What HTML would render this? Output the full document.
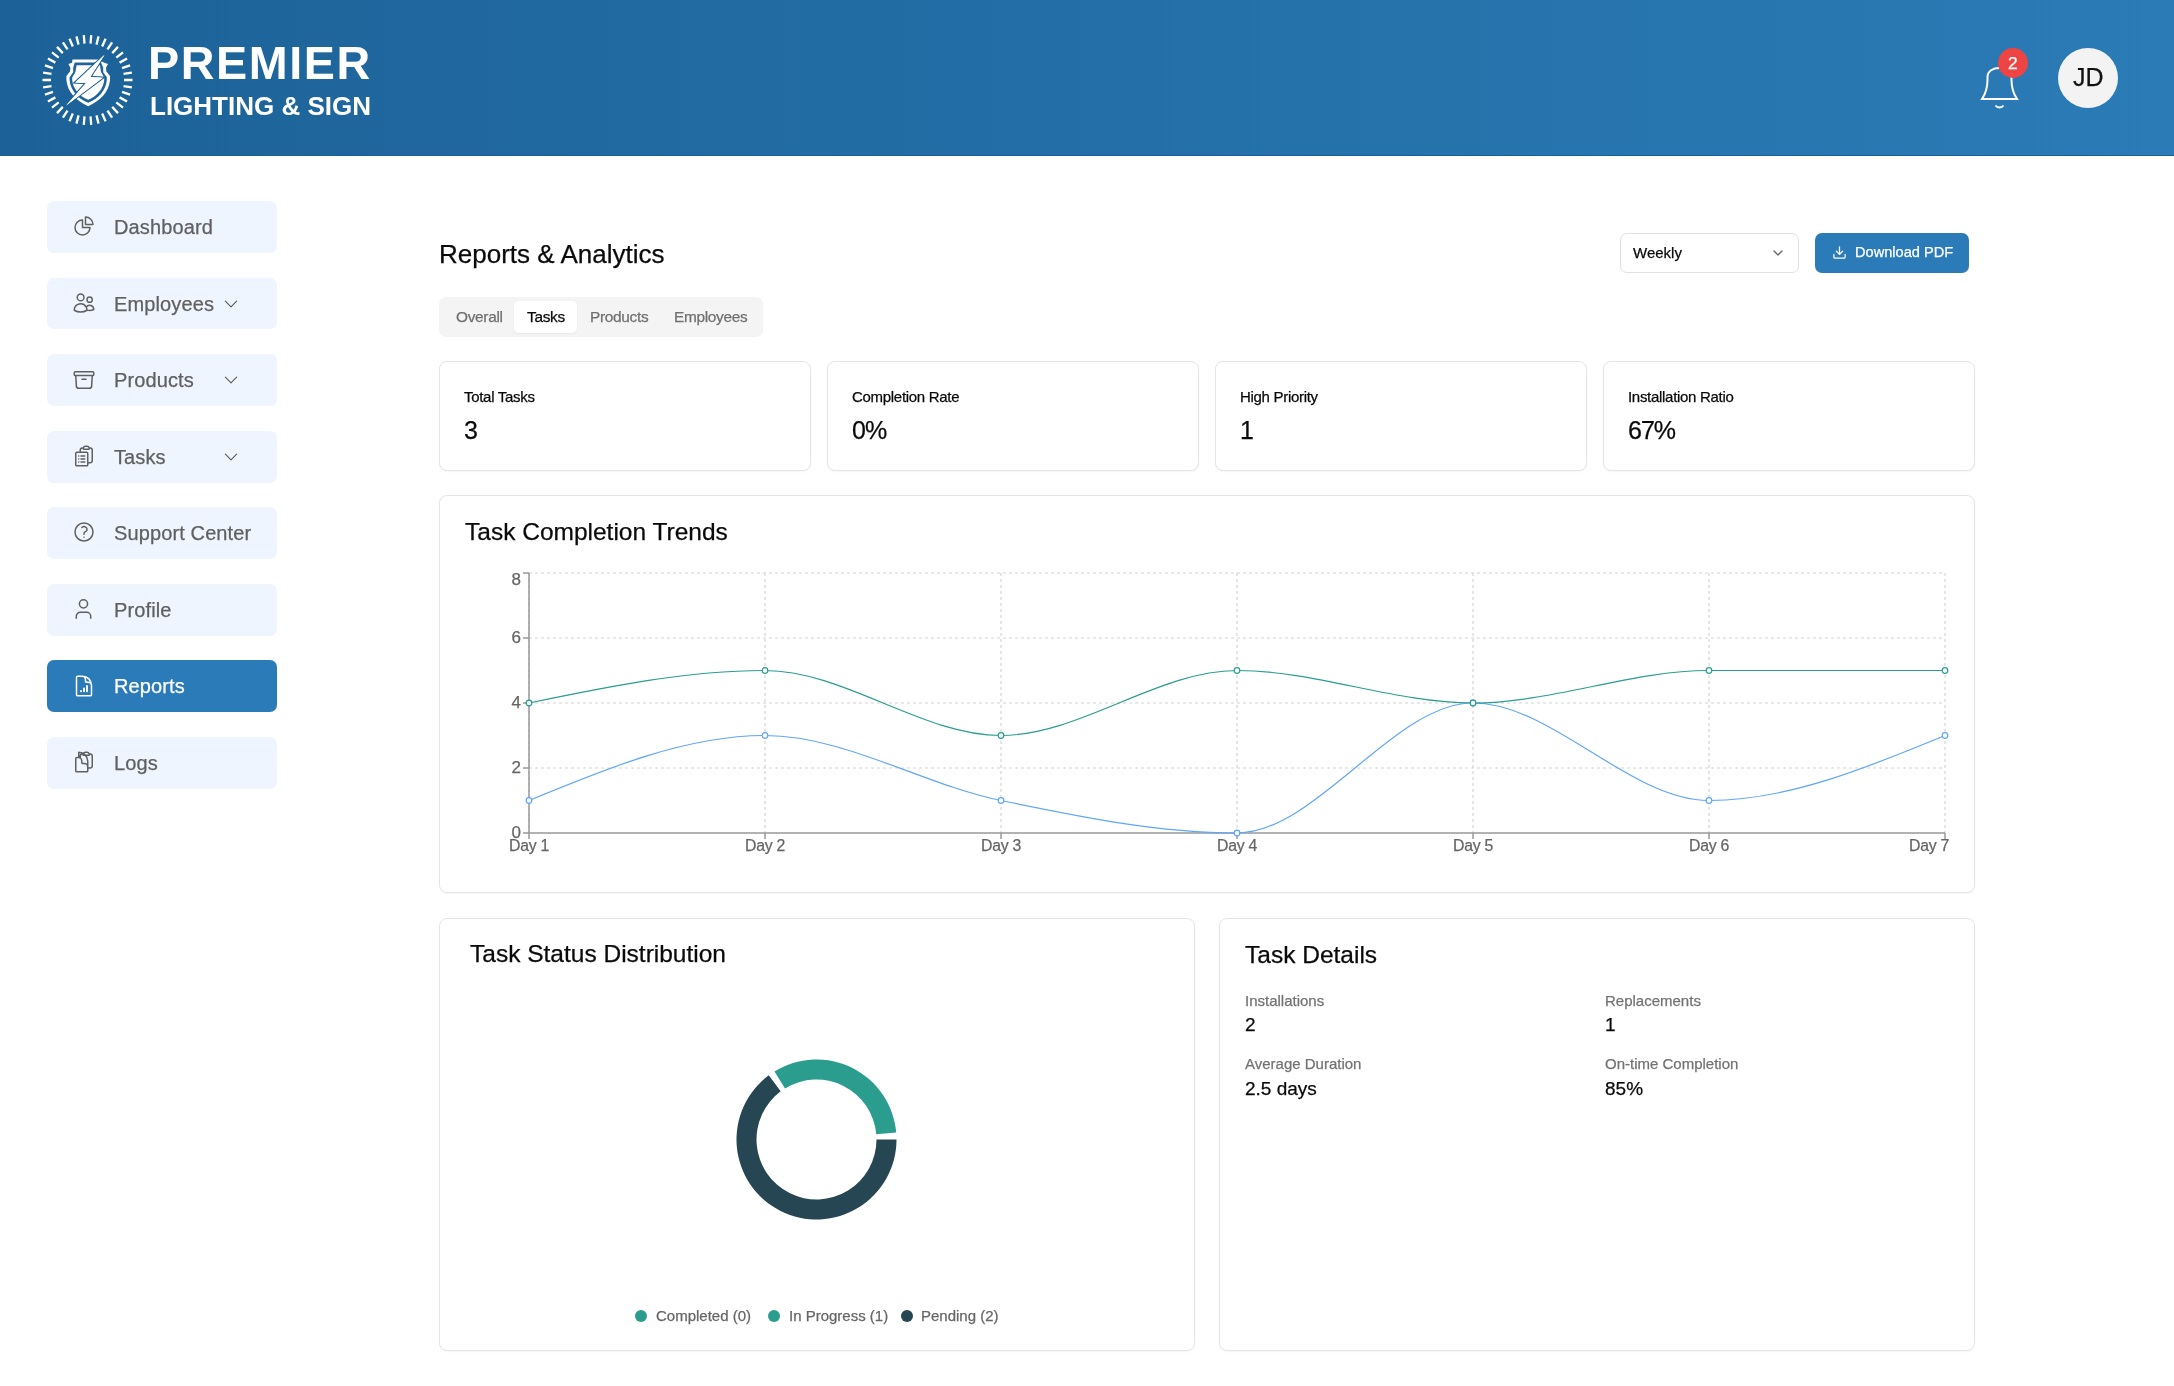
<!DOCTYPE html><html><head><meta charset="utf-8"><style>
*{box-sizing:border-box;margin:0;padding:0}
html,body{width:2174px;height:1386px;overflow:hidden;background:#fff;font-family:"Liberation Sans",sans-serif;-webkit-font-smoothing:antialiased}
.t{position:absolute;white-space:nowrap;line-height:1;will-change:transform;-webkit-text-stroke:0.25px currentColor}
.b{position:absolute}
</style></head><body>
<div class="b" style="left:0;top:0;width:2174px;height:156px;background:linear-gradient(90deg,#1c6298 0%,#2b7bb6 100%);border-bottom:1px solid #17609d"></div>
<svg class="b" style="left:0;top:0" width="400" height="156" viewBox="0 0 400 156">
<path d="M90.51 43.62L91.22 35.15M96.46 44.62L98.55 36.38M102.16 46.57L105.58 38.79M107.46 49.44L112.11 42.33M112.22 53.15L117.98 46.89M116.30 57.58L123.01 52.36M119.60 62.63L127.08 58.58M122.02 68.15L130.06 65.39M123.50 73.99L131.89 72.59M124.00 80.00L132.50 80.00M123.50 86.01L131.89 87.41M122.02 91.85L130.06 94.61M119.60 97.37L127.08 101.42M116.30 102.42L123.01 107.64M112.22 106.85L117.98 113.11M107.46 110.56L112.11 117.67M102.16 113.43L105.58 121.21M96.46 115.38L98.55 123.62M90.51 116.38L91.22 124.85M84.49 116.38L83.78 124.85M78.54 115.38L76.45 123.62M72.84 113.43L69.42 121.21M67.54 110.56L62.89 117.67M62.78 106.85L57.02 113.11M58.70 102.42L51.99 107.64M55.40 97.37L47.92 101.42M52.98 91.85L44.94 94.61M51.50 86.01L43.11 87.41M51.00 80.00L42.50 80.00M51.50 73.99L43.11 72.59M52.98 68.15L44.94 65.39M55.40 62.63L47.92 58.58M58.70 57.58L51.99 52.36M62.78 53.15L57.02 46.89M67.54 49.44L62.89 42.33M72.84 46.57L69.42 38.79M78.54 44.62L76.45 36.38M84.49 43.62L83.78 35.15" stroke="#fff" stroke-width="2.3" stroke-linecap="butt" fill="none"/>
<path d="M72.5 59.5 H98 L100.5 61 L104.5 62.8 L108 64 L106 67.8 L106.4 71.5 L110 76 L110 80 C109 92 100 101 88.2 106.2 C76.4 101 67.4 92 66.4 80 L66.4 76 L70 71.5 L70.4 67.8 L68.4 64 L72 62.8 Z" fill="#fff"/>
<path d="M74.8 62.4 H101 L103.2 67.5 L103.2 72.3 L106.8 77.2 L106.8 80 C106 90 98.5 98.8 88.2 102.8 C77.9 98.8 70.4 90 69.6 80 L69.6 77.2 L73.2 72.3 L73.2 67.5 Z" fill="#1e649b"/>
<path d="M76.6 65.2 H100 L101 72 L104.2 77.5 L104.2 80 C103.4 88.6 97 96.4 88.2 99.8 C79.4 96.4 73 88.6 72.2 80 L72.2 77.5 L75.4 72 Z" fill="#fff"/>
<path d="M104.6 54.8 L75.2 82.5 L86 83 L66.1 105.4 L102.9 77.7 L90.3 76.9 Z" fill="#fff" stroke="#1e649b" stroke-width="2.4" stroke-linejoin="miter" paint-order="stroke"/>
<path d="M104.6 54.8 L75.2 82.5 L86 83 L66.1 105.4 L102.9 77.7 L90.3 76.9 Z" fill="#fff"/>
</svg>
<div class="t" style="left:147.6px;top:39.85px;font-size:46.7px;color:#fff;font-weight:700;letter-spacing:1.58px;-webkit-text-stroke:0">PREMIER</div>
<div class="t" style="left:149.6px;top:92.55px;font-size:26px;color:#fff;font-weight:700;letter-spacing:0px;-webkit-text-stroke:0">LIGHTING &amp; SIGN</div>
<svg class="b" style="left:1970px;top:55px" width="60" height="60" viewBox="1970 55 60 60">
<path d="M1982 99 L2017 99 C2013 93 2011.5 88 2011.5 80 L2011.5 77 C2011.5 71 2006 68 1999.5 68 C1993 68 1987.5 71 1987.5 77 L1987.5 80 C1987.5 88 1986 93 1982 99 Z" fill="none" stroke="#fff" stroke-width="2"/>
<path d="M1995.5 105.5 C1997.5 108 2001.5 108 2003.5 105.5" fill="none" stroke="#fff" stroke-width="2"/>
</svg>
<div class="b" style="left:1998.2px;top:48.4px;width:30px;height:30px;border-radius:50%;background:#ef4444"></div>
<div class="t" style="left:2008.4px;top:55.30px;font-size:17.4px;color:#fff;font-weight:400;letter-spacing:0px;">2</div>
<div class="b" style="left:2058px;top:48px;width:60px;height:60px;border-radius:50%;background:#f3f3f3"></div>
<div class="t" style="left:2073.4px;top:65.25px;font-size:25px;color:#111;font-weight:400;letter-spacing:0px;">JD</div>
<div class="b" style="left:47px;top:201px;width:230px;height:51.5px;border-radius:7px;background:#eef5fe"></div>
<svg class="b" style="left:72px;top:214.35px" width="24" height="24" viewBox="0 0 24 24" fill="none" stroke="#606060" stroke-width="1.5" stroke-linecap="round" stroke-linejoin="round"><path d="M10.5 6a7.5 7.5 0 1 0 7.5 7.5h-7.5V6Z"/><path d="M13.5 10.5H21A7.5 7.5 0 0 0 13.5 3v7.5Z"/></svg>
<div class="t" style="left:113.5px;top:216.75px;font-size:20px;color:#606060;font-weight:400;letter-spacing:0.12px;">Dashboard</div>
<div class="b" style="left:47px;top:277.9px;width:230px;height:51.5px;border-radius:7px;background:#eef5fe"></div>
<svg class="b" style="left:72px;top:291.25px" width="24" height="24" viewBox="0 0 24 24" fill="none" stroke="#606060" stroke-width="1.5" stroke-linecap="round" stroke-linejoin="round"><path d="M15 19.128a9.38 9.38 0 0 0 2.625.372 9.337 9.337 0 0 0 4.121-.952 4.125 4.125 0 0 0-7.533-2.493M15 19.128v-.003c0-1.113-.285-2.16-.786-3.07M15 19.128v.106A12.318 12.318 0 0 1 8.624 21c-2.331 0-4.512-.645-6.374-1.766l-.001-.109a6.375 6.375 0 0 1 11.964-3.07M12 6.375a3.375 3.375 0 1 1-6.75 0 3.375 3.375 0 0 1 6.75 0Zm8.25 2.25a2.625 2.625 0 1 1-5.25 0 2.625 2.625 0 0 1 5.25 0Z"/></svg>
<div class="t" style="left:113.5px;top:293.65px;font-size:20px;color:#606060;font-weight:400;letter-spacing:0.12px;">Employees</div>
<svg class="b" style="left:222px;top:294.65px" width="18" height="18" viewBox="0 0 24 24" fill="none" stroke="#606060" stroke-width="1.6" stroke-linecap="round" stroke-linejoin="round"><path d="m19.5 8.25-7.5 7.5-7.5-7.5"/></svg>
<div class="b" style="left:47px;top:354.4px;width:230px;height:51.5px;border-radius:7px;background:#eef5fe"></div>
<svg class="b" style="left:72px;top:367.75px" width="24" height="24" viewBox="0 0 24 24" fill="none" stroke="#606060" stroke-width="1.5" stroke-linecap="round" stroke-linejoin="round"><path d="m20.25 7.5-.625 10.632a2.25 2.25 0 0 1-2.247 2.118H6.622a2.25 2.25 0 0 1-2.247-2.118L3.75 7.5M10 11.25h4M3.375 7.5h17.25c.621 0 1.125-.504 1.125-1.125v-1.5c0-.621-.504-1.125-1.125-1.125H3.375c-.621 0-1.125.504-1.125 1.125v1.5c0 .621.504 1.125 1.125 1.125Z"/></svg>
<div class="t" style="left:113.5px;top:370.15px;font-size:20px;color:#606060;font-weight:400;letter-spacing:0.12px;">Products</div>
<svg class="b" style="left:222px;top:371.15px" width="18" height="18" viewBox="0 0 24 24" fill="none" stroke="#606060" stroke-width="1.6" stroke-linecap="round" stroke-linejoin="round"><path d="m19.5 8.25-7.5 7.5-7.5-7.5"/></svg>
<div class="b" style="left:47px;top:431px;width:230px;height:51.5px;border-radius:7px;background:#eef5fe"></div>
<svg class="b" style="left:72px;top:444.35px" width="24" height="24" viewBox="0 0 24 24" fill="none" stroke="#606060" stroke-width="1.5" stroke-linecap="round" stroke-linejoin="round"><path d="M9 12h3.75M9 15h3.75M9 18h3.75m3 .75H18a2.25 2.25 0 0 0 2.25-2.25V6.108c0-1.135-.845-2.098-1.976-2.192a48.424 48.424 0 0 0-1.123-.08m-5.801 0c-.065.21-.1.433-.1.664 0 .414.336.75.75.75h4.5a.75.75 0 0 0 .75-.75 2.25 2.25 0 0 0-.1-.664m-5.8 0A2.251 2.251 0 0 1 13.5 2.25H15c1.012 0 1.867.668 2.15 1.586m-5.8 0c-.376.023-.75.05-1.124.08C9.095 4.01 8.25 4.973 8.25 6.108V8.25m0 0H4.875c-.621 0-1.125.504-1.125 1.125v11.25c0 .621.504 1.125 1.125 1.125h9.75c.621 0 1.125-.504 1.125-1.125V9.375c0-.621-.504-1.125-1.125-1.125H8.25ZM6.75 12h.008v.008H6.75V12Zm0 3h.008v.008H6.75V15Zm0 3h.008v.008H6.75V18Z"/></svg>
<div class="t" style="left:113.5px;top:446.75px;font-size:20px;color:#606060;font-weight:400;letter-spacing:0.12px;">Tasks</div>
<svg class="b" style="left:222px;top:447.75px" width="18" height="18" viewBox="0 0 24 24" fill="none" stroke="#606060" stroke-width="1.6" stroke-linecap="round" stroke-linejoin="round"><path d="m19.5 8.25-7.5 7.5-7.5-7.5"/></svg>
<div class="b" style="left:47px;top:507.1px;width:230px;height:51.5px;border-radius:7px;background:#eef5fe"></div>
<svg class="b" style="left:72px;top:520.45px" width="24" height="24" viewBox="0 0 24 24" fill="none" stroke="#606060" stroke-width="1.5" stroke-linecap="round" stroke-linejoin="round"><path d="M9.879 7.519c1.171-1.025 3.071-1.025 4.242 0 1.172 1.025 1.172 2.687 0 3.712-.203.179-.43.326-.67.442-.745.361-1.45.999-1.45 1.827v.75M21 12a9 9 0 1 1-18 0 9 9 0 0 1 18 0Zm-9 5.25h.008v.008H12v-.008Z"/></svg>
<div class="t" style="left:113.5px;top:522.85px;font-size:20px;color:#606060;font-weight:400;letter-spacing:0.12px;">Support Center</div>
<div class="b" style="left:47px;top:584px;width:230px;height:51.5px;border-radius:7px;background:#eef5fe"></div>
<svg class="b" style="left:72px;top:597.35px" width="24" height="24" viewBox="0 0 24 24" fill="none" stroke="#606060" stroke-width="1.5" stroke-linecap="round" stroke-linejoin="round"><circle cx="11.5" cy="6.85" r="4.1"/><path d="M4.3 21.85v-2.6a4 4 0 0 1 4-4h6.4a4 4 0 0 1 4 4v2.6" stroke-linecap="butt"/></svg>
<div class="t" style="left:113.5px;top:599.75px;font-size:20px;color:#606060;font-weight:400;letter-spacing:0.12px;">Profile</div>
<div class="b" style="left:47px;top:660.2px;width:230px;height:51.5px;border-radius:7px;background:#2b7bb9"></div>
<svg class="b" style="left:72px;top:673.55px" width="24" height="24" viewBox="0 0 24 24" fill="none" stroke="#fff" stroke-width="1.5" stroke-linecap="round" stroke-linejoin="round"><path d="M19.5 14.25v-2.625a3.375 3.375 0 0 0-3.375-3.375h-1.5A1.125 1.125 0 0 1 13.5 7.125v-1.5a3.375 3.375 0 0 0-3.375-3.375H8.25M10.5 2.25H5.625c-.621 0-1.125.504-1.125 1.125v17.25c0 .621.504 1.125 1.125 1.125h12.75c.621 0 1.125-.504 1.125-1.125V11.25a9 9 0 0 0-9-9Z"/><path d="M9 17v.25M12 14.5v2.75M15 12v5.25" stroke-width="1.9"/></svg>
<div class="t" style="left:113.5px;top:675.95px;font-size:20px;color:#fff;font-weight:400;letter-spacing:0.12px;">Reports</div>
<div class="b" style="left:47px;top:737.1px;width:230px;height:51.5px;border-radius:7px;background:#eef5fe"></div>
<svg class="b" style="left:72px;top:750.45px" width="24" height="24" viewBox="0 0 24 24" fill="none" stroke="#606060" stroke-width="1.5" stroke-linecap="round" stroke-linejoin="round"><path d="M8.25 7.5V6.108c0-1.135.845-2.098 1.976-2.192.373-.03.748-.057 1.123-.08M15.75 18H18a2.25 2.25 0 0 0 2.25-2.25V6.108c0-1.135-.845-2.098-1.976-2.192a48.424 48.424 0 0 0-1.123-.08M15.75 18.75v-1.875a3.375 3.375 0 0 0-3.375-3.375h-1.5a1.125 1.125 0 0 1-1.125-1.125v-1.5A3.375 3.375 0 0 0 6.375 7.5H5.25m11.9-3.664A2.251 2.251 0 0 0 15 2.25h-1.5a2.251 2.251 0 0 0-2.15 1.586m5.8 0c.065.21.1.433.1.664v.75h-6V4.5c0-.231.035-.454.1-.664M6.75 7.5H4.875c-.621 0-1.125.504-1.125 1.125v12c0 .621.504 1.125 1.125 1.125h9.75c.621 0 1.125-.504 1.125-1.125v-9.375a9 9 0 0 0-9-9Z"/></svg>
<div class="t" style="left:113.5px;top:752.85px;font-size:20px;color:#606060;font-weight:400;letter-spacing:0.12px;">Logs</div>
<div class="t" style="left:439px;top:240.65px;font-size:26px;color:#0a0a0a;font-weight:400;letter-spacing:0px;">Reports &amp; Analytics</div>
<div class="b" style="left:1619.5px;top:233.4px;width:179px;height:39.3px;border:1px solid #e2e2e2;border-radius:7px;background:#fff"></div>
<div class="t" style="left:1633px;top:245.00px;font-size:15px;color:#0a0a0a;font-weight:400;letter-spacing:0px;">Weekly</div>
<svg class="b" style="left:1770px;top:245px" width="16" height="16" viewBox="0 0 24 24" fill="none" stroke="#666" stroke-width="2" stroke-linecap="round" stroke-linejoin="round"><path d="m6 9 6 6 6-6"/></svg>
<div class="b" style="left:1815px;top:233px;width:154px;height:39.7px;border-radius:7px;background:#2b7bb9"></div>
<svg class="b" style="left:1831.5px;top:244.5px" width="15" height="15" viewBox="0 0 24 24" fill="none" stroke="#fff" stroke-width="2" stroke-linecap="round" stroke-linejoin="round"><path d="M21 15v4a2 2 0 0 1-2 2H5a2 2 0 0 1-2-2v-4"/><path d="m7 10 5 5 5-5"/><path d="M12 15V3"/></svg>
<div class="t" style="left:1855px;top:245.10px;font-size:14.6px;color:#fff;font-weight:400;letter-spacing:0px;">Download PDF</div>
<div class="b" style="left:439px;top:297px;width:324px;height:40px;border-radius:7px;background:#f4f4f4"></div>
<div class="b" style="left:514px;top:301px;width:63px;height:32px;border-radius:5px;background:#fff;box-shadow:0 1px 2px rgba(0,0,0,0.05)"></div>
<div class="t" style="left:455.5px;top:309.30px;font-size:15.4px;color:#707070;font-weight:400;letter-spacing:-0.3px;">Overall</div>
<div class="t" style="left:526.7px;top:309.30px;font-size:15.4px;color:#0a0a0a;font-weight:400;letter-spacing:-0.3px;">Tasks</div>
<div class="t" style="left:589.7px;top:309.30px;font-size:15.4px;color:#707070;font-weight:400;letter-spacing:-0.3px;">Products</div>
<div class="t" style="left:674.3px;top:309.30px;font-size:15.4px;color:#707070;font-weight:400;letter-spacing:-0.3px;">Employees</div>
<div class="b" style="left:439px;top:361.3px;width:372px;height:109.5px;border:1px solid #e5e5e5;border-radius:8px;background:#fff;box-shadow:0 1px 2px rgba(0,0,0,0.04)"></div>
<div class="t" style="left:464.3px;top:388.50px;font-size:15px;color:#0a0a0a;font-weight:400;letter-spacing:-0.3px;">Total Tasks</div>
<div class="t" style="left:464.3px;top:417.50px;font-size:25px;color:#0a0a0a;font-weight:400;letter-spacing:-1px;">3</div>
<div class="b" style="left:827px;top:361.3px;width:372px;height:109.5px;border:1px solid #e5e5e5;border-radius:8px;background:#fff;box-shadow:0 1px 2px rgba(0,0,0,0.04)"></div>
<div class="t" style="left:852.3px;top:388.50px;font-size:15px;color:#0a0a0a;font-weight:400;letter-spacing:-0.3px;">Completion Rate</div>
<div class="t" style="left:852.3px;top:417.50px;font-size:25px;color:#0a0a0a;font-weight:400;letter-spacing:-1px;">0%</div>
<div class="b" style="left:1215px;top:361.3px;width:372px;height:109.5px;border:1px solid #e5e5e5;border-radius:8px;background:#fff;box-shadow:0 1px 2px rgba(0,0,0,0.04)"></div>
<div class="t" style="left:1240.3px;top:388.50px;font-size:15px;color:#0a0a0a;font-weight:400;letter-spacing:-0.3px;">High Priority</div>
<div class="t" style="left:1240.3px;top:417.50px;font-size:25px;color:#0a0a0a;font-weight:400;letter-spacing:-1px;">1</div>
<div class="b" style="left:1603px;top:361.3px;width:372px;height:109.5px;border:1px solid #e5e5e5;border-radius:8px;background:#fff;box-shadow:0 1px 2px rgba(0,0,0,0.04)"></div>
<div class="t" style="left:1628.3px;top:388.50px;font-size:15px;color:#0a0a0a;font-weight:400;letter-spacing:-0.3px;">Installation Ratio</div>
<div class="t" style="left:1628.3px;top:417.50px;font-size:25px;color:#0a0a0a;font-weight:400;letter-spacing:-1px;">67%</div>
<div class="b" style="left:439px;top:495px;width:1536px;height:398px;border:1px solid #e5e5e5;border-radius:8px;background:#fff;box-shadow:0 1px 2px rgba(0,0,0,0.04)"></div>
<div class="t" style="left:465px;top:519.85px;font-size:24.5px;color:#0a0a0a;font-weight:400;letter-spacing:0px;">Task Completion Trends</div>
<svg class="b" style="left:0;top:0" width="2174" height="1386" viewBox="0 0 2174 1386">
<g stroke="#d4d4d4" stroke-dasharray="3 3" stroke-width="1.2"><line x1="529" y1="573" x2="1945" y2="573"/><line x1="529" y1="638" x2="1945" y2="638"/><line x1="529" y1="703" x2="1945" y2="703"/><line x1="529" y1="768" x2="1945" y2="768"/><line x1="529" y1="573" x2="529" y2="833"/><line x1="765" y1="573" x2="765" y2="833"/><line x1="1001" y1="573" x2="1001" y2="833"/><line x1="1237" y1="573" x2="1237" y2="833"/><line x1="1473" y1="573" x2="1473" y2="833"/><line x1="1709" y1="573" x2="1709" y2="833"/><line x1="1945" y1="573" x2="1945" y2="833"/></g>
<g stroke="#999" stroke-width="1.5"><line x1="529" y1="573" x2="529" y2="833"/><line x1="529" y1="833" x2="1945" y2="833"/>
<line x1="523" y1="573" x2="529" y2="573"/><line x1="523" y1="638" x2="529" y2="638"/><line x1="523" y1="703" x2="529" y2="703"/><line x1="523" y1="768" x2="529" y2="768"/><line x1="523" y1="833" x2="529" y2="833"/>
<line x1="529" y1="833" x2="529" y2="839"/><line x1="765" y1="833" x2="765" y2="839"/><line x1="1001" y1="833" x2="1001" y2="839"/><line x1="1237" y1="833" x2="1237" y2="839"/><line x1="1473" y1="833" x2="1473" y2="839"/><line x1="1709" y1="833" x2="1709" y2="839"/><line x1="1945" y1="833" x2="1945" y2="839"/></g>
<path d="M529.00,800.50C607.67,768.00,686.33,735.50,765.00,735.50C843.67,735.50,922.33,784.25,1001.00,800.50C1079.67,816.75,1158.33,833.00,1237.00,833.00C1315.67,833.00,1394.33,703.00,1473.00,703.00C1551.67,703.00,1630.33,800.50,1709.00,800.50C1787.67,800.50,1866.33,768.00,1945.00,735.50" fill="none" stroke="#60a5fa" stroke-width="1.2"/>
<path d="M529.00,703.00C607.67,686.75,686.33,670.50,765.00,670.50C843.67,670.50,922.33,735.50,1001.00,735.50C1079.67,735.50,1158.33,670.50,1237.00,670.50C1315.67,670.50,1394.33,703.00,1473.00,703.00C1551.67,703.00,1630.33,670.50,1709.00,670.50C1787.67,670.50,1866.33,670.50,1945.00,670.50" fill="none" stroke="#2a9d8f" stroke-width="1.2"/>
<circle cx="529" cy="800.5" r="2.8" fill="#fff" stroke="#60a5fa" stroke-width="1.2"/><circle cx="765" cy="735.5" r="2.8" fill="#fff" stroke="#60a5fa" stroke-width="1.2"/><circle cx="1001" cy="800.5" r="2.8" fill="#fff" stroke="#60a5fa" stroke-width="1.2"/><circle cx="1237" cy="833.0" r="2.8" fill="#fff" stroke="#60a5fa" stroke-width="1.2"/><circle cx="1473" cy="703.0" r="2.8" fill="#fff" stroke="#60a5fa" stroke-width="1.2"/><circle cx="1709" cy="800.5" r="2.8" fill="#fff" stroke="#60a5fa" stroke-width="1.2"/><circle cx="1945" cy="735.5" r="2.8" fill="#fff" stroke="#60a5fa" stroke-width="1.2"/>
<circle cx="529" cy="703.0" r="2.8" fill="#fff" stroke="#2a9d8f" stroke-width="1.2"/><circle cx="765" cy="670.5" r="2.8" fill="#fff" stroke="#2a9d8f" stroke-width="1.2"/><circle cx="1001" cy="735.5" r="2.8" fill="#fff" stroke="#2a9d8f" stroke-width="1.2"/><circle cx="1237" cy="670.5" r="2.8" fill="#fff" stroke="#2a9d8f" stroke-width="1.2"/><circle cx="1473" cy="703.0" r="2.8" fill="#fff" stroke="#2a9d8f" stroke-width="1.2"/><circle cx="1709" cy="670.5" r="2.8" fill="#fff" stroke="#2a9d8f" stroke-width="1.2"/><circle cx="1945" cy="670.5" r="2.8" fill="#fff" stroke="#2a9d8f" stroke-width="1.2"/>
</svg>
<div class="t" style="left:470px;width:51px;text-align:right;top:571.30px;font-size:17px;color:#666">8</div>
<div class="t" style="left:470px;width:51px;text-align:right;top:629.30px;font-size:17px;color:#666">6</div>
<div class="t" style="left:470px;width:51px;text-align:right;top:694.40px;font-size:17px;color:#666">4</div>
<div class="t" style="left:470px;width:51px;text-align:right;top:759.40px;font-size:17px;color:#666">2</div>
<div class="t" style="left:470px;width:51px;text-align:right;top:824.30px;font-size:17px;color:#666">0</div>
<div class="t" style="left:469px;width:120px;text-align:center;top:838.40px;font-size:15.8px;letter-spacing:-0.3px;color:#666">Day 1</div>
<div class="t" style="left:705px;width:120px;text-align:center;top:838.40px;font-size:15.8px;letter-spacing:-0.3px;color:#666">Day 2</div>
<div class="t" style="left:941px;width:120px;text-align:center;top:838.40px;font-size:15.8px;letter-spacing:-0.3px;color:#666">Day 3</div>
<div class="t" style="left:1177px;width:120px;text-align:center;top:838.40px;font-size:15.8px;letter-spacing:-0.3px;color:#666">Day 4</div>
<div class="t" style="left:1413px;width:120px;text-align:center;top:838.40px;font-size:15.8px;letter-spacing:-0.3px;color:#666">Day 5</div>
<div class="t" style="left:1649px;width:120px;text-align:center;top:838.40px;font-size:15.8px;letter-spacing:-0.3px;color:#666">Day 6</div>
<div class="t" style="left:1869px;width:120px;text-align:center;top:838.40px;font-size:15.8px;letter-spacing:-0.3px;color:#666">Day 7</div>
<div class="b" style="left:439px;top:917.5px;width:756px;height:433px;border:1px solid #e5e5e5;border-radius:8px;background:#fff;box-shadow:0 1px 2px rgba(0,0,0,0.04)"></div>
<div class="b" style="left:1219px;top:917.5px;width:756px;height:433px;border:1px solid #e5e5e5;border-radius:8px;background:#fff;box-shadow:0 1px 2px rgba(0,0,0,0.04)"></div>
<div class="t" style="left:470px;top:941.75px;font-size:24.5px;color:#0a0a0a;font-weight:400;letter-spacing:0px;">Task Status Distribution</div>
<div class="t" style="left:1244.5px;top:942.60px;font-size:24.5px;color:#0a0a0a;font-weight:400;letter-spacing:0px;">Task Details</div>
<svg class="b" style="left:0;top:0" width="2174" height="1386" viewBox="0 0 2174 1386"><path d="M896.20,1132.53 A80.00,80.00,0,0,0,774.50,1071.41 L785.00,1088.43 A60.00,60.00,0,0,1,876.27,1134.27 Z" fill="#2a9d8f"/><path d="M768.73,1075.33 A80.00,80.00,0,1,0,896.50,1139.50 L876.50,1139.50 A60.00,60.00,0,1,1,780.67,1091.37 Z" fill="#264653"/></svg>
<div class="b" style="left:635px;top:1310px;width:12px;height:12px;border-radius:50%;background:#2a9d8f"></div>
<div class="t" style="left:655.7px;top:1307.80px;font-size:15px;color:#666;font-weight:400;letter-spacing:0px;">Completed (0)</div>
<div class="b" style="left:767.8px;top:1310px;width:12px;height:12px;border-radius:50%;background:#2a9d8f"></div>
<div class="t" style="left:788.5px;top:1307.80px;font-size:15px;color:#666;font-weight:400;letter-spacing:0px;">In Progress (1)</div>
<div class="b" style="left:900.6px;top:1310px;width:12px;height:12px;border-radius:50%;background:#264653"></div>
<div class="t" style="left:921.3px;top:1307.80px;font-size:15px;color:#666;font-weight:400;letter-spacing:0px;">Pending (2)</div>
<div class="t" style="left:1244.8px;top:992.50px;font-size:15px;color:#737373;font-weight:400;letter-spacing:0px;">Installations</div>
<div class="t" style="left:1244.8px;top:1014.85px;font-size:19px;color:#0a0a0a;font-weight:400;letter-spacing:0px;">2</div>
<div class="t" style="left:1605.4px;top:992.50px;font-size:15px;color:#737373;font-weight:400;letter-spacing:0px;">Replacements</div>
<div class="t" style="left:1605.4px;top:1014.85px;font-size:19px;color:#0a0a0a;font-weight:400;letter-spacing:0px;">1</div>
<div class="t" style="left:1244.8px;top:1056.25px;font-size:15px;color:#737373;font-weight:400;letter-spacing:0px;">Average Duration</div>
<div class="t" style="left:1244.8px;top:1079.00px;font-size:19px;color:#0a0a0a;font-weight:400;letter-spacing:0px;">2.5 days</div>
<div class="t" style="left:1605.4px;top:1056.25px;font-size:15px;color:#737373;font-weight:400;letter-spacing:0px;">On-time Completion</div>
<div class="t" style="left:1605.4px;top:1079.00px;font-size:19px;color:#0a0a0a;font-weight:400;letter-spacing:0px;">85%</div>
</body></html>
